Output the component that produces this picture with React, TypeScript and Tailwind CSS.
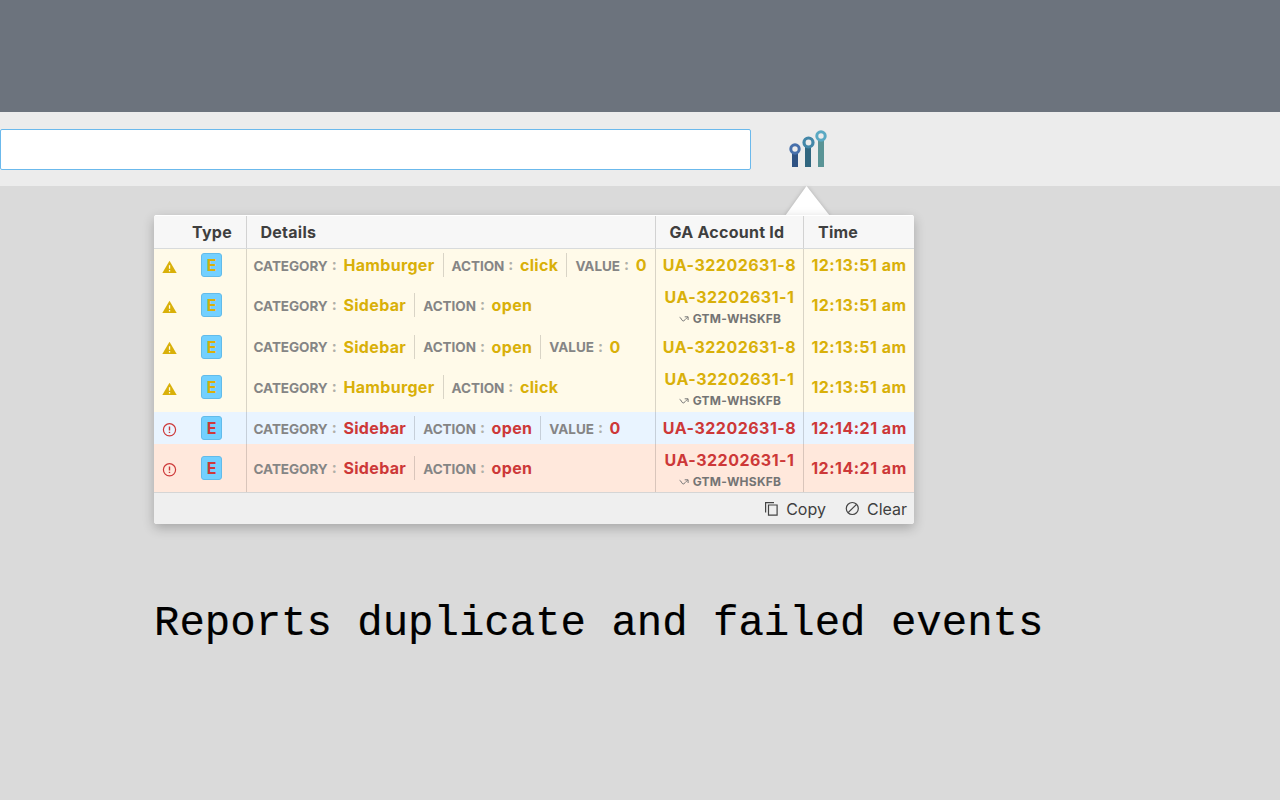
import React from "react";

type Field = { label: string; value: string };
type Row = {
  status: "duplicate" | "failed";
  layout: string;
  text: string;
  fields: Field[];
  account: string;
  gtm?: string;
  time: string;
};

const YELLOW = "text-[#d9b009]";
const RED = "text-[#cd3838]";

const category = (value: string): Field => ({ label: "CATEGORY", value });
const action = (value: string): Field => ({ label: "ACTION", value });
const zero: Field = { label: "VALUE", value: "0" };

const rows: Row[] = [
  { status: "duplicate", layout: "h-[32px] bg-[#fffae9]", text: YELLOW, fields: [category("Hamburger"), action("click"), zero], account: "UA-32202631-8", time: "12:13:51 am" },
  { status: "duplicate", layout: "h-[49px] bg-[#fffae9]", text: YELLOW, fields: [category("Sidebar"), action("open")], account: "UA-32202631-1", gtm: "GTM-WHSKFB", time: "12:13:51 am" },
  { status: "duplicate", layout: "h-[33px] bg-[#fffae9]", text: YELLOW, fields: [category("Sidebar"), action("open"), zero], account: "UA-32202631-8", time: "12:13:51 am" },
  { status: "duplicate", layout: "h-[49px] bg-[#fffae9]", text: YELLOW, fields: [category("Hamburger"), action("click")], account: "UA-32202631-1", gtm: "GTM-WHSKFB", time: "12:13:51 am" },
  { status: "failed", layout: "h-[32px] bg-[#e9f4ff]", text: RED, fields: [category("Sidebar"), action("open"), zero], account: "UA-32202631-8", time: "12:14:21 am" },
  { status: "failed", layout: "h-[48px] bg-[#ffe8dc]", text: RED, fields: [category("Sidebar"), action("open")], account: "UA-32202631-1", gtm: "GTM-WHSKFB", time: "12:14:21 am" },
];

const COLS = "grid grid-cols-[93px_409px_148px_110px] grid-rows-[100%]";
const LINE = "border-r border-black/15";

function StatusIcon({ status }: { status: Row["status"] }) {
  if (status === "duplicate") {
    return (
      <svg width="16" height="14" viewBox="0 0 16 14" className="mt-[3px] shrink-0">
        <path d="M8.5 .8 15.7 13H1.3Z" fill="#d9b009" />
        <path d="M7.9 5.3h1.3v3.4H7.9zM7.9 10h1.3v1.4H7.9z" fill="#fffae9" />
      </svg>
    );
  }
  return (
    <svg width="16" height="14" viewBox="0 0 16 14" className="mt-[3px] shrink-0" fill="none" stroke="#cd3838">
      <circle cx="8.5" cy="6.8" r="6.1" strokeWidth="1.2" />
      <path d="M8.5 3.4v4.2M8.5 8.8v1.3" strokeWidth="1.4" />
    </svg>
  );
}

function EventRow({ row, tail }: { row: Row; tail: boolean }) {
  return (
    <div className={`${COLS} ${row.layout} ${row.text} font-bold`}>
      <div className={`${LINE} flex items-center pl-[7px] ${tail ? "pb-px" : ""}`}>
        <StatusIcon status={row.status} />
        <span className="ml-[24px] flex h-[24px] w-[21px] items-center justify-center rounded-[3px] border border-[#62bbea] bg-[#73d0ff] text-[16px] leading-[22px]">
          E
        </span>
      </div>
      <div className={`${LINE} flex items-center pl-[6.5px] ${tail ? "pb-px" : ""}`}>
        {row.fields.map((field, i) => (
          <div
            key={field.label}
            className={`flex h-[24px] items-center whitespace-nowrap ${i > 0 ? "ml-[8px] border-l border-black/15 pl-[8px]" : ""}`}
          >
            <span className="mt-[2px] text-[13.5px] tracking-[-0.05px] text-[#858585]">{field.label}</span>
            <span className="ml-[4px] mt-px text-[15px] text-[#b0b0a8]">:</span>
            <span className="ml-[6.7px] text-[16px] tracking-[0.33px]">{field.value}</span>
          </div>
        ))}
      </div>
      <div className={`${LINE} flex flex-col items-center justify-center whitespace-nowrap ${tail ? "pb-px" : ""}`}>
        <div className={`text-[16px] leading-[22px] tracking-[0.48px] ${row.gtm ? "mt-[5px]" : ""}`}>{row.account}</div>
        {row.gtm && (
          <div className="mt-px flex items-center pl-px text-[12px] leading-[20px] tracking-[0.25px] text-[#747474]">
            <svg width="10" height="8" viewBox="0 0 10 8" className="mr-[4px]" fill="none" stroke="#777">
              <path d="M.6 2.3C2 2.2 2.7 6 4.2 6 5.4 6 6.6 3.7 8.8 2.1M5.7 1.8h3.4v3.2" />
            </svg>
            {row.gtm}
          </div>
        )}
      </div>
      <div className={`flex items-center justify-center whitespace-nowrap text-[16px] tracking-[0.5px] ${tail ? "pb-px" : ""}`}>{row.time}</div>
    </div>
  );
}

function Logo() {
  return (
    <svg width="48" height="44" viewBox="0 0 48 44" className="ml-[33px]" fill="none">
      <path d="M8 24h6v17H8z" fill="#2f5283" />
      <path d="M21 18h6v23h-6z" fill="#30667f" />
      <path d="M34 11h6v30h-6z" fill="#5a9496" />
      <circle cx="11" cy="23" r="4.2" fill="#ececec" stroke="#466fab" strokeWidth="3" />
      <circle cx="24.5" cy="16.5" r="4.5" fill="#ececec" stroke="#4387a8" strokeWidth="3.2" />
      <circle cx="37" cy="10" r="4.2" fill="#ececec" stroke="#5aa9c3" strokeWidth="3" />
    </svg>
  );
}

export default function App() {
  return (
    <div className="h-[800px] w-full overflow-hidden bg-[#dadada] font-['Inter',sans-serif]">
      <div className="h-[112px] bg-[#6c737d]" />
      <div className="flex h-[74px] bg-[#ececec]">
        <div className="mt-[17px] h-[41px] w-[751px] rounded-[2px] border border-[#6bb9ec] bg-white" />
        <div className="pt-[14px]">
          <Logo />
        </div>
      </div>

      <main className="pl-[154px] pt-[29px]">
        <div className="relative w-[760px]">
          <svg width="52" height="32" viewBox="0 0 52 32" className="absolute -top-[31px] left-[627px] drop-shadow-[0_1px_2px_rgba(0,0,0,0.25)]">
            <path d="M25.5 2 49 32H4Z" fill="#fff" />
          </svg>
          <div className="relative h-[309px] overflow-hidden rounded-[3px] bg-white text-[#3f3f3f] shadow-[0_4px_12px_rgba(0,0,0,0.24)]">
            <div className={`${COLS} h-[34px] border-b border-[#d8dbdc] border-t border-t-white bg-[#f7f7f7] text-[16px] font-bold leading-[32px] tracking-[0.25px]`}>
              <div className={`${LINE} pl-[38px]`}>Type</div>
              <div className={`${LINE} pl-[13.5px]`}>Details</div>
              <div className={`${LINE} pl-[13.5px]`}>GA Account Id</div>
              <div className="pl-[14px]">Time</div>
            </div>
            {rows.map((row, i) => (
              <EventRow key={i} row={row} tail={i === 1 || i === 3} />
            ))}
            <div className="flex h-[32px] items-center justify-end border-t border-[#d5d5d5] bg-[#efefef] pr-[7px] text-[16px]">
              <svg width="16" height="16" viewBox="0 0 16 16" fill="none" stroke="#444" strokeWidth="1.2">
                <path d="M2.6 11.5V1.6H11M5.5 4h8.6v10.2H5.5z" />
              </svg>
              <span className="ml-[7px]">Copy</span>
              <svg width="16" height="16" viewBox="0 0 16 16" className="ml-[18px]" fill="none" stroke="#444" strokeWidth="1.2">
                <circle cx="8.3" cy="7.5" r="6" />
                <path d="m4.1 11.7 8.4-8.4" />
              </svg>
              <span className="ml-[7px]">Clear</span>
            </div>
          </div>
        </div>
        <h1 className="mt-[74px] whitespace-nowrap font-['Liberation_Mono',monospace] text-[42.35px] leading-[52px] text-black [-webkit-text-stroke:0.2px_black]">
          Reports duplicate and failed events
        </h1>
      </main>
    </div>
  );
}
